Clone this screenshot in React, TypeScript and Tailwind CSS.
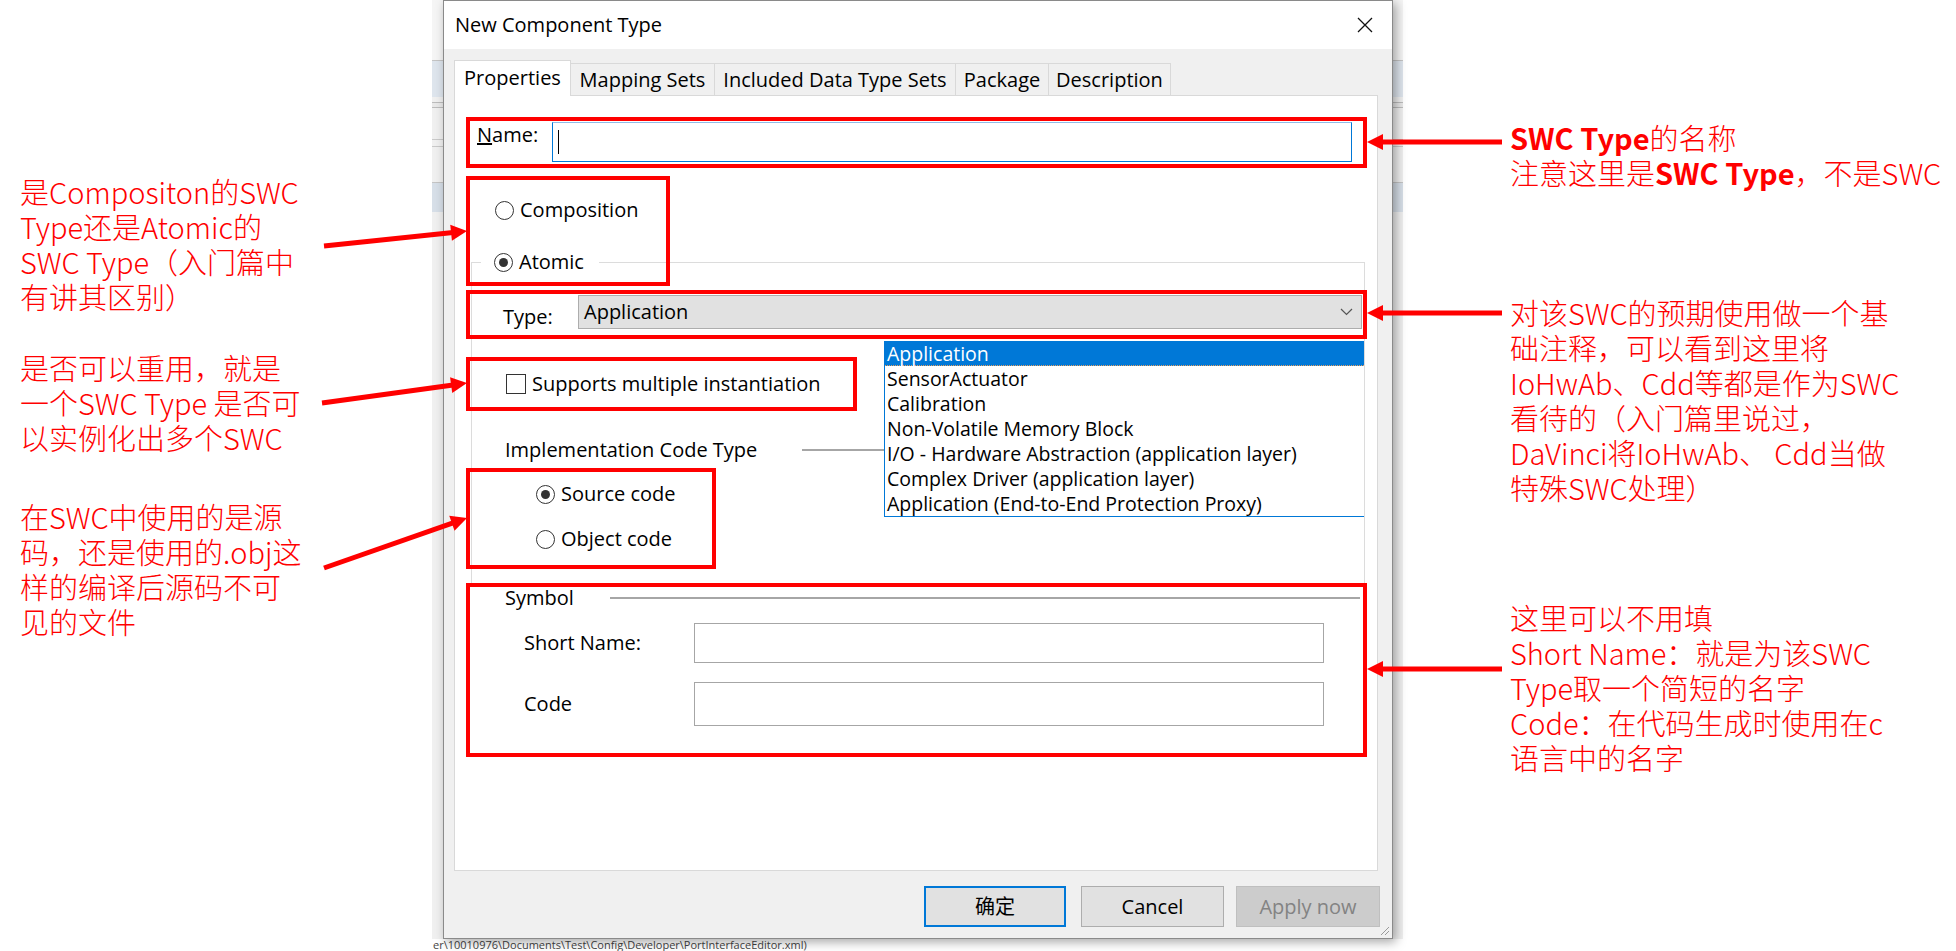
import React from "react";

const RED = "#ff0000";

type Pt = [number, number];

// red callout arrow drawn over the screenshot
function Arrow({ from, to }: { from: Pt; to: Pt }) {
  const [x1, y1] = from;
  const [x2, y2] = to;
  const len = Math.hypot(x2 - x1, y2 - y1);
  const ux = (x2 - x1) / len;
  const uy = (y2 - y1) / len;
  const hl = 16;
  const hw = 8;
  const bx = x2 - ux * hl;
  const by = y2 - uy * hl;
  const head = `${x2},${y2} ${bx - uy * hw},${by + ux * hw} ${bx + uy * hw},${by - ux * hw}`;
  return (
    <g>
      <line x1={x1} y1={y1} x2={bx + ux * 2} y2={by + uy * 2} stroke={RED} strokeWidth={5} />
      <polygon points={head} fill={RED} />
    </g>
  );
}

function Radio({ checked }: { checked?: boolean }) {
  return (
    <span className="flex h-[19px] w-[19px] shrink-0 items-center justify-center rounded-full border border-[#333333] bg-white">
      {checked && <span className="h-[9px] w-[9px] rounded-full bg-[#333333]" />}
    </span>
  );
}

const LeftNotes = () => (
  <div className="flex w-[432px] shrink-0 flex-col pl-[20px] font-['Noto_Sans_CJK_SC',sans-serif] text-[29px] font-light leading-[35px] whitespace-nowrap text-[#ff0000]">
    <div className="mt-[174px]">
      <div>是Compositon的SWC</div>
      <div>Type还是Atomic的</div>
      <div>SWC Type（入门篇中</div>
      <div>有讲其区别）</div>
    </div>
    <div className="mt-[36px]">
      <div>是否可以重用，就是</div>
      <div>一个SWC Type 是否可</div>
      <div>以实例化出多个SWC</div>
    </div>
    <div className="mt-[44px]">
      <div>在SWC中使用的是源</div>
      <div>码，还是使用的.obj这</div>
      <div>样的编译后源码不可</div>
      <div>见的文件</div>
    </div>
  </div>
);

const RightNotes = () => (
  <div className="flex flex-1 flex-col pl-[107px] font-['Noto_Sans_CJK_SC',sans-serif] text-[29px] font-light leading-[35px] whitespace-nowrap text-[#ff0000]">
    <div className="mt-[120px]">
      <div>
        <span className="font-bold">SWC Type</span>的名称
      </div>
      <div>
        注意这里是<span className="font-bold">SWC Type</span>，不是SWC
      </div>
    </div>
    <div className="mt-[105px]">
      <div>对该SWC的预期使用做一个基</div>
      <div>础注释，可以看到这里将</div>
      <div>IoHwAb、Cdd等都是作为SWC</div>
      <div>看待的（入门篇里说过，</div>
      <div>DaVinci将IoHwAb、 Cdd当做</div>
      <div>特殊SWC处理）</div>
    </div>
    <div className="mt-[95px]">
      <div>这里可以不用填</div>
      <div>Short Name：就是为该SWC</div>
      <div>Type取一个简短的名字</div>
      <div>Code：在代码生成时使用在c</div>
      <div>语言中的名字</div>
    </div>
  </div>
);

// slice of the application window lying behind the dialog
const BackStrip = ({ width }: { width: string }) => (
  <div className={`flex shrink-0 flex-col overflow-hidden ${width}`}>
    <div className="h-[60px] bg-[#f5f5f5]" />
    <div className="h-[1px] bg-[#c4c4c4]" />
    <div className="h-[36px] bg-[#dee5ed]" />
    <div className="h-[5px] bg-[#f0f0f0]" />
    <div className="h-[1px] bg-[#bcbcbc]" />
    <div className="h-[4px] bg-[#e9e9e9]" />
    <div className="h-[1px] bg-[#bcbcbc]" />
    <div className="h-[31px] bg-[#f0f0f0]" />
    <div className="h-[1px] bg-[#c9c9c9]" />
    <div className="h-[6px] bg-[#f0f0f0]" />
    <div className="h-[1px] bg-[#c9c9c9]" />
    <div className="h-[35px] bg-[#f0f0f0]" />
    <div className="h-[1px] bg-[#c4c4c4]" />
    <div className="h-[29px] bg-[#d7dfe8]" />
    <div className="flex-1 bg-[#f0f0f0]" />
  </div>
);

const tabs = [
  { name: "Mapping Sets", w: "w-[144px]" },
  { name: "Included Data Type Sets", w: "w-[241px]" },
  { name: "Package", w: "w-[93px]" },
  { name: "Description", w: "w-[122px]" },
];

const typeOptions = [
  "Application",
  "SensorActuator",
  "Calibration",
  "Non-Volatile Memory Block",
  "I/O - Hardware Abstraction (application layer)",
  "Complex Driver (application layer)",
  "Application (End-to-End Protection Proxy)",
];

const Dialog = () => (
  <div className="relative z-10 flex h-[939px] w-[950px] shrink-0 flex-col border border-[#8a8a8a] bg-[#f0f0f0] text-[20px] leading-[28px] text-black shadow-[3px_3px_10px_rgba(0,0,0,0.35)]">
    <div className="flex h-[48px] items-center justify-between bg-white pl-[11px] pr-[19px]">
      <span>New Component Type</span>
      <svg width="16" height="16" viewBox="0 0 16 16">
        <path d="M1 1 L15 15 M15 1 L1 15" stroke="#111" strokeWidth="1.3" fill="none" />
      </svg>
    </div>

    <div className="ml-[10px] mt-[11px] flex h-[36px] items-end">
      <div className="relative z-10 flex h-[36px] w-[117px] items-center justify-center border-x border-t border-[#d9d9d9] bg-white pb-[2px]">
        Properties
      </div>
      {tabs.map((t) => (
        <div
          key={t.name}
          className={`flex h-[33px] items-center justify-center border-t border-r border-[#d9d9d9] bg-[#f0f0f0] ${t.w}`}
        >
          {t.name}
        </div>
      ))}
    </div>

    <div className="-mt-px ml-[10px] flex h-[776px] w-[924px] flex-col border border-[#d9d9d9] bg-white">
      <div className="mt-[26px] flex items-start">
        <span className="ml-[22px] w-[75px] leading-[26px]">
          <span className="underline">N</span>ame:
        </span>
        <div className="flex h-[40px] w-[800px] items-center border border-[#0078d7] border-t-[#8fbce9] pl-[5px]">
          <div className="h-[24px] w-px bg-black" />
        </div>
      </div>

      <div className="mt-[34px] flex h-[28px] items-center pl-[40px]">
        <Radio />
        <span className="ml-[6px]">Composition</span>
      </div>

      <fieldset className="ml-[16px] mt-[24px] w-[894px] border border-[#dcdcdc] pb-[31px]">
        <legend className="ml-[9px] pl-[13px] pr-[15px]">
          <span className="flex h-[28px] items-center">
            <Radio checked />
            <span className="ml-[6px]">Atomic</span>
          </span>
        </legend>

        <div className="mt-[19px] flex items-start">
          <span className="ml-[31px] mt-[8px] w-[75px]">Type:</span>
          <div className="relative flex h-[34px] w-[784px] items-center justify-between border border-[#adadad] bg-[#e1e1e1] pl-[5px] pr-[8px]">
            <span>Application</span>
            <svg width="13" height="8" viewBox="0 0 13 8">
              <path d="M1 1 L6.5 6.5 L12 1" stroke="#555" strokeWidth="1.2" fill="none" />
            </svg>
            <ul className="absolute left-[305px] top-[45px] z-20 flex w-[480px] flex-col border-b border-l border-[#0078d7] bg-white text-[19.5px] leading-[25px]">
              {typeOptions.map((o, i) => (
                <li
                  key={o}
                  className={
                    i === 0
                      ? "h-[25px] border-b border-dotted border-[#e8a060] bg-[#0078d7] pl-[2px] whitespace-nowrap text-white"
                      : "h-[25px] pl-[2px] whitespace-nowrap"
                  }
                >
                  {o}
                </li>
              ))}
            </ul>
          </div>
        </div>

        <div className="ml-[34px] mt-[39px] flex h-[28px] items-center">
          <span className="h-[20px] w-[20px] shrink-0 border border-[#333333] bg-white" />
          <span className="ml-[6px]">Supports multiple instantiation</span>
        </div>

        <div className="mt-[38px] flex h-[28px] items-center">
          <span className="ml-[33px] w-[297px] whitespace-nowrap">Implementation Code Type</span>
          <div className="h-[2px] w-[558px] bg-[#a6a6a6]" />
        </div>

        <div className="ml-[64px] mt-[16px] flex h-[28px] items-center">
          <Radio checked />
          <span className="ml-[6px]">Source code</span>
        </div>
        <div className="ml-[64px] mt-[17px] flex h-[28px] items-center">
          <Radio />
          <span className="ml-[6px]">Object code</span>
        </div>
      </fieldset>

      <div className="-mt-px flex h-[28px] items-center">
        <span className="ml-[50px] w-[105px]">Symbol</span>
        <div className="h-[2px] w-[750px] bg-[#a6a6a6]" />
      </div>

      <div className="mt-[11px] flex items-center">
        <span className="ml-[69px] w-[170px]">Short Name:</span>
        <div className="h-[40px] w-[630px] border border-[#a6a6a6] bg-white" />
      </div>
      <div className="mt-[19px] flex items-center">
        <span className="ml-[69px] w-[170px]">Code</span>
        <div className="h-[44px] w-[630px] border border-[#a6a6a6] bg-white" />
      </div>
    </div>

    <div className="mt-[15px] flex justify-end pr-[12px]">
      <button className="flex h-[41px] w-[142px] items-center justify-center border-2 border-[#0078d7] bg-[#e1e1e1]">
        确定
      </button>
      <button className="ml-[15px] flex h-[41px] w-[143px] items-center justify-center border border-[#adadad] bg-[#e1e1e1]">
        Cancel
      </button>
      <button className="ml-[12px] flex h-[41px] w-[144px] items-center justify-center border border-[#bfbfbf] bg-[#cccccc] text-[#838383]">
        Apply now
      </button>
    </div>

    <svg className="absolute bottom-[2px] right-[2px]" width="12" height="12" viewBox="0 0 12 12">
      <path d="M11 3 L3 11 M11 7 L7 11" stroke="#9a9a9a" strokeWidth="1" />
    </svg>
  </div>
);

const Desktop = () => (
  <div className="flex w-[971px] shrink-0 flex-col bg-[#f0f0f0] font-['Open_Sans','Noto_Sans_CJK_SC',sans-serif]">
    <div className="flex h-[939px]">
      <BackStrip width="w-[11px]" />
      <Dialog />
      <BackStrip width="w-[10px]" />
    </div>
    <div className="flex h-[12px] items-center bg-white pl-[1px]">
      <div className="whitespace-nowrap text-[11px] leading-[12px] text-[#444444]">
        er\10010976\Documents\Test\Config\Developer\PortInterfaceEditor.xml)
      </div>
    </div>
  </div>
);

const redBoxes = [
  "left-[466px] top-[117px] h-[51px] w-[901px]",
  "left-[466px] top-[176px] h-[110px] w-[204px]",
  "left-[466px] top-[290px] h-[49px] w-[901px]",
  "left-[466px] top-[357px] h-[54px] w-[391px]",
  "left-[466px] top-[468px] h-[101px] w-[250px]",
  "left-[466px] top-[583px] h-[174px] w-[901px]",
];

const Annotations = () => (
  <>
    {redBoxes.map((b) => (
      <div key={b} className={`pointer-events-none absolute z-30 border-4 border-[#ff0000] ${b}`} />
    ))}
    <svg className="pointer-events-none absolute left-0 top-0 z-30" width="1956" height="951">
      <Arrow from={[324, 246]} to={[467, 231]} />
      <Arrow from={[322, 403]} to={[467, 383]} />
      <Arrow from={[324, 568]} to={[467, 518]} />
      <Arrow from={[1502, 142]} to={[1367, 142]} />
      <Arrow from={[1502, 313]} to={[1367, 313]} />
      <Arrow from={[1502, 669]} to={[1367, 669]} />
    </svg>
  </>
);

export default function App() {
  return (
    <div className="relative flex h-[951px] w-[1956px] overflow-hidden bg-white">
      <LeftNotes />
      <Desktop />
      <RightNotes />
      <Annotations />
    </div>
  );
}
